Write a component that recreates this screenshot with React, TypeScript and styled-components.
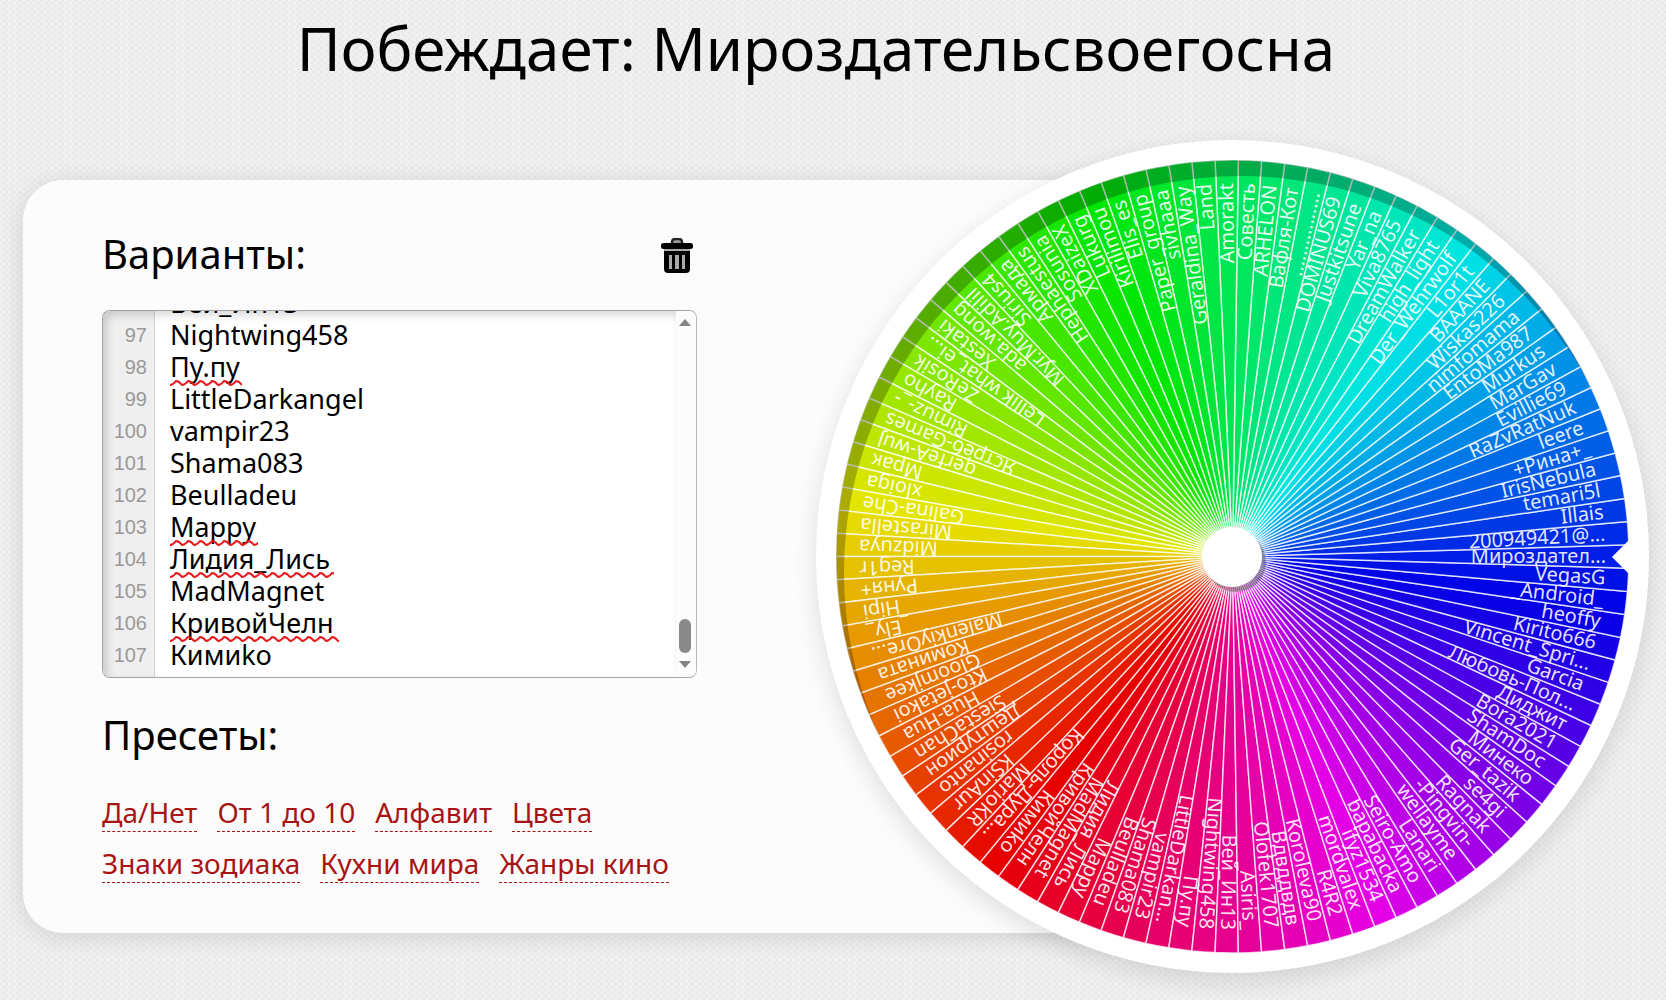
import React, { useLayoutEffect, useRef } from "react";
import styled, { createGlobalStyle } from "styled-components";

const NAMES = [
  "Король-Дура...", "MarioKR", "KSinAur", "rosinanto", "Дештурион", "SiestaChan", "Hua-Hua", "Kto-jetakoi",
  "Gloomjkee", "Комината", "MalenkiyOre...", "_Ely_", "Hipi", "Руня+", "Reg1r", "Midzuya", "Mirastella",
  "Galina-Che", "xloiga", "Мрак", "qerfeA-wuJ", "Ястреб-Games", "Rimuz-_-", "Rayho", "ZeRosik",
  "Lellik what_ei...", "Xestaki", "ada.wong", "Myr.Muy.Adilil", "Sirius4", "Армада", "Hephaestus", "Sosunia",
  "XDaizeX", "Lukurg", "Kirilimou", "Elis_es", "Paper_group", "sivhaaa", "Geraldina_Way", "Land", "Amorakt",
  "Совесть", "ARHELON", "Вафля-Кот", "................", "DOMINUS69", "Justkitsune", "Yar_na", "Viva8765",
  "DreamWalker", "high_light", "Der_Wehrwolf", "L1or1t", "BAAANE", "Wiskas226", "nimfomama", "EntoMa987",
  "Murkus", "MarGav", "Evillie69", "RaZvRatNuk", "leere", "+Рина+_", "IrisNebula", "temari5l", "Illais",
  "200949421@...", "Мироздател...", "VegasG", "_Android_", "heoffy", "Kirito666", "Vincent_Spri...", "Garcia",
  "Любовь-Пол...", "Диджит", "Bora2021", "ShamDoc", "Минеко", "Ger_tazik", "se4gi", "Ragnak", "-Pingvin-",
  "wellayme", "Lanari", "Seiro-Amo", "bapabacka", "ifyz1534", "mordvalex", "R4R2", "Koroleva90", "Вдвддвдв",
  "Olofek1707", "_Asiris_", "Вей_Ин13", "Nightwing458", "Пу.пу", "LittleDarkan...", "vampir23", "Shama083",
  "Beulladeu", "Mappy", "Лидия_Лись", "MadMagnet", "КривойЧелн", "Кимиko",
];

const WINNER = 69;

/* Visible tail of the list; `wavy` is the width of the spelling mark */
const ROWS = [
  { n: 96, name: "Вей_Ин13", wavy: 0 },
  { n: 97, name: "Nightwing458", wavy: 0 },
  { n: 98, name: "Пу.пу", wavy: 72 },
  { n: 99, name: "LittleDarkangel", wavy: 0 },
  { n: 100, name: "vampir23", wavy: 0 },
  { n: 101, name: "Shama083", wavy: 0 },
  { n: 102, name: "Beulladeu", wavy: 0 },
  { n: 103, name: "Маppy", wavy: 88 },
  { n: 104, name: "Лидия_Лись", wavy: 164 },
  { n: 105, name: "MadMagnet", wavy: 0 },
  { n: 106, name: "КривойЧелн", wavy: 169 },
  { n: 107, name: "Кимиko", wavy: 0 },
];

const PRESETS = ["Да/Нет", "От 1 до 10", "Алфавит", "Цвета", "Знаки зодиака", "Кухни мира", "Жанры кино"];

const GlobalStyle = createGlobalStyle`
  * { box-sizing: border-box; }
  body {
    margin: 0;
    min-height: 100vh;
    overflow-x: hidden;
    font-family: "Noto Sans", "Open Sans", sans-serif;
    color: #000;
    background-color: #f0f0f0;
    background-image:
      radial-gradient(circle, rgba(0, 0, 0, 0.05) 0, rgba(0, 0, 0, 0) 2px),
      radial-gradient(circle, rgba(0, 0, 0, 0.05) 0, rgba(0, 0, 0, 0) 2px);
    background-size: 7px 6px, 7px 6px;
    background-position: 0 0, 3px 3px;
  }
`;

const Page = styled.main`
  padding: 8px 17px 27px 23px;
`;

const Title = styled.h1`
  margin: 0 0 50px;
  padding-right: 40px;
  font-size: 60px;
  line-height: 80px;
  padding-bottom: 2px;
  font-weight: 400;
  text-align: center;
`;

const Stage = styled.div`
  display: flex;
  align-items: center;
`;

const Card = styled.section`
  flex: 1;
  min-width: 0;
  margin-right: -25vw;
  padding: 48px 79px 50px;
  border-radius: 40px;
  background: rgba(255, 255, 255, 0.8);
  box-shadow: 0 4px 24px rgba(0, 0, 0, 0.12);
`;

const Controls = styled.div`
  max-width: 595px;
`;

const HeadRow = styled.div`
  display: flex;
  align-items: center;
  justify-content: space-between;
  margin-bottom: 30px;
`;

const Heading = styled.h2`
  margin: 0;
  font-size: 40px;
  line-height: 52px;
  font-weight: 400;
`;

const IconButton = styled.button`
  display: flex;
  margin-right: 3px;
  padding: 4px 0 0;
  border: 0;
  background: none;
  cursor: pointer;
`;

const Editor = styled.div`
  position: relative;
  display: flex;
  height: 368px;
  margin-bottom: 31px;
  border: 1px solid #a4a4a4;
  border-right-color: #b8b8b8;
  border-radius: 8px;
  overflow: hidden;
  background: #fff;

  &::after {
    content: "";
    position: absolute;
    inset: 0 20px 0 0;
    box-shadow: inset 4px 4px 8px rgba(0, 0, 0, 0.16);
    border-radius: 6px 0 0 6px;
    pointer-events: none;
  }
`;

const Gutter = styled.div`
  display: flex;
  flex-direction: column;
  justify-content: flex-end;
  width: 52px;
  padding: 0 7px 6px 0;
  border-right: 1px solid #d4d4d4;
  background: #efefef;
  color: #999;
  font: 20px/32px "Liberation Sans", Arial, sans-serif;
  text-align: right;
`;

const Lines = styled.textarea`
  flex: 1;
  min-width: 0;
  height: 100%;
  padding: 0 0 6px 15px;
  border: 0;
  outline: 0;
  resize: none;
  overflow-y: scroll;
  scrollbar-width: none;
  background: #fff;
  color: #000;
  font: 27px/32px "Noto Sans", "Open Sans", sans-serif;
  white-space: pre;
`;

const Marks = styled.div`
  position: absolute;
  inset: 0 20px 0 67px;
  display: flex;
  flex-direction: column;
  justify-content: flex-end;
  padding-bottom: 2px;
  pointer-events: none;
`;

const MarkRow = styled.div`
  display: flex;
  flex: none;
  align-items: flex-end;
  height: 32px;
`;

const ScrollBar = styled.div`
  position: relative;
  display: flex;
  flex-direction: column;
  align-items: center;
  width: 20px;
  padding: 8px 4px 9px 2px;
  background: #fcfcfc;
`;

const Arrow = styled.i<{ $down?: boolean }>`
  border: 6px solid transparent;
  border-top: ${(p) => (p.$down ? "7px solid #858585" : "0")};
  border-bottom: ${(p) => (p.$down ? "0" : "7px solid #858585")};
`;

const Thumb = styled.div`
  width: 12px;
  height: 34px;
  margin: auto 0 8px;
  border-radius: 6px;
  background: #8a8a8a;
`;

const Presets = styled.nav`
  display: flex;
  flex-wrap: wrap;
  gap: 12px 20px;
  margin-top: 32px;
`;

const Preset = styled.a`
  border-bottom: 1px dashed #a81414;
  color: #a81414;
  font-size: 28px;
  line-height: 38px;
  text-decoration: none;
`;

const Wheel = styled.div`
  position: relative;
  flex: none;
  width: 50vw;
  aspect-ratio: 1;
  padding: 20px;
  border-radius: 50%;
  background: #fff;
  box-shadow: 0 8px 24px rgba(0, 0, 0, 0.12);

  &::after {
    content: "";
    position: absolute;
    inset: 20px;
    border-radius: 50%;
    box-shadow: inset 8px 16px 0 rgba(0, 0, 0, 0.25);
  }
`;

const Disc = styled.svg`
  display: block;
  width: 100%;
  height: 100%;
  font-family: "Noto Sans", "Open Sans", sans-serif;
  font-size: 20px;
`;

const Hub = styled.div`
  position: absolute;
  z-index: 1;
  top: 50%;
  left: 50%;
  width: 60px;
  height: 60px;
  margin: -30px 0 0 -31px;
  border-radius: 50%;
  background: #fff;
  box-shadow: 4px 5px 1px rgba(0, 0, 0, 0.3);
`;

const Pointer = styled.div`
  position: absolute;
  z-index: 1;
  top: 50%;
  right: 18px;
  margin-top: -19px;
  border: 19px solid transparent;
  border-left-width: 0;
  border-right-color: #fff;
`;

const R = 397;
const STEP = 360 / NAMES.length;

function slicePath() {
  const half = (STEP / 2) * (Math.PI / 180);
  const x = R * Math.cos(half);
  const y = R * Math.sin(half);
  return `M0 0L${x} ${-y}A${R} ${R} 0 0 1 ${x} ${y}Z`;
}

function WheelDisc() {
  const d = slicePath();
  const order = NAMES.map((name, k) => ({ name, i: k + 1 })).reverse();
  return (
    <Disc viewBox="-397 -397 794 794" role="img" aria-label="Колесо">
      {order.map(({ name, i }) => (
        <g key={i} transform={`rotate(${(i - WINNER) * STEP})`}>
          <path
            d={d}
            fill={`hsl(${(i / NAMES.length) * 360}, 100%, 45%)`}
            stroke="rgba(255,255,255,0.75)"
            strokeWidth="1.5"
          />
          <text x="374" y="6" textAnchor="end" fill="rgba(255,255,255,0.9)">
            {name}
          </text>
        </g>
      ))}
    </Disc>
  );
}

function Squiggle({ width }: { width: number }) {
  let d = "M0 6";
  for (let x = 0; x < width; x += 12) d += "q3 0 6 -4q3 0 6 4";
  return (
    <svg width={width} height="8" fill="none" stroke="#e8191c" strokeWidth="2">
      <path d={d} />
    </svg>
  );
}

function TrashIcon() {
  return (
    <svg width="34" height="36" viewBox="0 0 34 36">
      <path d="M12 6V4q0-3 3-3h4q3 0 3 3v2" fill="#999" stroke="#222" strokeWidth="2.5" />
      <rect x="1" y="5" width="32" height="6" rx="2.5" fill="#000" />
      <rect x="4" y="11" width="26" height="2" fill="#aaa" />
      <path d="M4 13h26v18q0 4-4 4H8q-4 0-4-4z" fill="#000" />
      <g fill="#aaa">
        <rect x="9" y="17" width="3" height="14" />
        <rect x="15" y="17" width="4" height="14" />
        <rect x="22" y="17" width="3" height="14" />
      </g>
    </svg>
  );
}

export default function App() {
  const area = useRef<HTMLTextAreaElement>(null);

  useLayoutEffect(() => {
    if (area.current) area.current.scrollTop = area.current.scrollHeight;
  }, []);

  return (
    <>
      <GlobalStyle />
      <Page>
        <Title>Побеждает: Мироздательсвоегосна</Title>
        <Stage>
          <Card>
            <Controls>
              <HeadRow>
                <Heading as="label" htmlFor="variants">Варианты:</Heading>
                <IconButton type="button" aria-label="Очистить">
                  <TrashIcon />
                </IconButton>
              </HeadRow>
              <Editor>
                <Gutter>
                  {ROWS.map((r) => (
                    <div key={r.n}>{r.n}</div>
                  ))}
                </Gutter>
                <Lines
                  id="variants"
                  ref={area}
                  spellCheck={false}
                  defaultValue={ROWS.map((r) => r.name).join("\n")}
                />
                <Marks>
                  {ROWS.map((r) => (
                    <MarkRow key={r.n}>{r.wavy > 0 && <Squiggle width={r.wavy} />}</MarkRow>
                  ))}
                </Marks>
                <ScrollBar>
                  <Arrow />
                  <Thumb />
                  <Arrow $down />
                </ScrollBar>
              </Editor>
              <Heading>Пресеты:</Heading>
              <Presets>
                {PRESETS.map((p) => (
                  <Preset key={p} href="#">{p}</Preset>
                ))}
              </Presets>
            </Controls>
          </Card>
          <Wheel>
            <WheelDisc />
            <Hub />
            <Pointer />
          </Wheel>
        </Stage>
      </Page>
    </>
  );
}
